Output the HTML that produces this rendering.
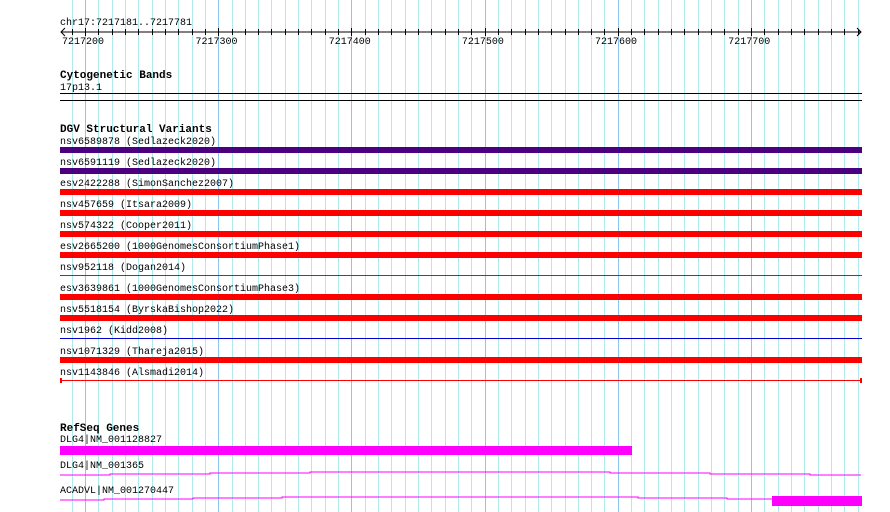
<!DOCTYPE html>
<html><head><meta charset="utf-8"><style>
html,body{margin:0;padding:0;background:#fff;width:890px;height:512px;overflow:hidden}
svg text{font-family:"Liberation Mono",monospace;font-size:10px;fill:#000}
svg text.b{font-weight:bold;font-size:11px}
</style></head><body>
<svg width="890" height="512" xmlns="http://www.w3.org/2000/svg">
<g id="grid"></g>
<text x="60" y="25">chr17:7217181..7217781</text>
<line x1="61" y1="32" x2="861" y2="32" stroke="#000"/>
<polyline points="65,28 61,32 65,36" fill="none" stroke="#000"/>
<polyline points="857,28 861,32 857,36" fill="none" stroke="#000"/>
<g id="ticks"></g>
<text x="83" y="44" text-anchor="middle">7217200</text>
<text x="216.5" y="44" text-anchor="middle">7217300</text>
<text x="349.7" y="44" text-anchor="middle">7217400</text>
<text x="482.9" y="44" text-anchor="middle">7217500</text>
<text x="616" y="44" text-anchor="middle">7217600</text>
<text x="749.3" y="44" text-anchor="middle">7217700</text>

<text class="b" x="60" y="78">Cytogenetic Bands</text>
<text x="60" y="90">17p13.1</text>
<rect x="60" y="93" width="802" height="1" fill="#000"/>
<rect x="60" y="100" width="802" height="1" fill="#000"/>

<text class="b" x="60" y="132">DGV Structural Variants</text>
<text x="60" y="144">nsv6589878 (Sedlazeck2020)</text>
<rect x="60" y="147" width="802" height="6" fill="#4b0082"/>
<text x="60" y="165">nsv6591119 (Sedlazeck2020)</text>
<rect x="60" y="168" width="802" height="6" fill="#4b0082"/>
<text x="60" y="186">esv2422288 (SimonSanchez2007)</text>
<rect x="60" y="189" width="802" height="6" fill="#f00"/>
<text x="60" y="207">nsv457659 (Itsara2009)</text>
<rect x="60" y="210" width="802" height="6" fill="#f00"/>
<text x="60" y="228">nsv574322 (Cooper2011)</text>
<rect x="60" y="231" width="802" height="6" fill="#f00"/>
<text x="60" y="249">esv2665200 (1000GenomesConsortiumPhase1)</text>
<rect x="60" y="252" width="802" height="6" fill="#f00"/>
<text x="60" y="270">nsv952118 (Dogan2014)</text>
<rect x="60" y="275" width="802" height="1" fill="#f00"/>
<text x="60" y="291">esv3639861 (1000GenomesConsortiumPhase3)</text>
<rect x="60" y="294" width="802" height="6" fill="#f00"/>
<text x="60" y="312">nsv5518154 (ByrskaBishop2022)</text>
<rect x="60" y="315" width="802" height="6" fill="#f00"/>
<text x="60" y="333">nsv1962 (Kidd2008)</text>
<rect x="60" y="338" width="802" height="1" fill="#00c"/>
<text x="60" y="354">nsv1071329 (Thareja2015)</text>
<rect x="60" y="357" width="802" height="6" fill="#f00"/>
<text x="60" y="375">nsv1143846 (Alsmadi2014)</text>
<rect x="60" y="380" width="802" height="1" fill="#f00"/>
<rect x="60" y="378" width="2" height="5" fill="#f00"/>
<rect x="860" y="378" width="2" height="5" fill="#f00"/>

<text class="b" x="60" y="431">RefSeq Genes</text>
<text x="60" y="442">DLG4|NM_001128827</text>
<rect x="60" y="446" width="572" height="9" fill="#f0f"/>
<text x="60" y="468">DLG4|NM_001365</text>
<polyline points="60,475 110,475 110,474 210,474 210,473 310,473 310,472 610,472 610,473 710,473 710,474 810,474 810,475 861,475" fill="none" stroke="#f0f" stroke-width="1"/>
<text x="60" y="493">ACADVL|NM_001270447</text>
<polyline points="60,500 104,500 104,499 193,499 193,498 282,498 282,497 638,497 638,498 727,498 727,499 772,499" fill="none" stroke="#f0f" stroke-width="1"/>
<rect x="772" y="496" width="90" height="10" fill="#f0f"/>
</svg>
<script>
var g=document.getElementById('grid'),t=document.getElementById('ticks'),s='',u='';
for(var k=-1;k<=58;k++){var x=85+13.32*k;var maj=((k%10)+10)%10==0;
s+='<rect x="'+(Math.round(x))+'" y="0" width="1" height="512" fill="'+(maj?'#8cc6ee':'#aeeaee')+'"/>';
u+='<rect x="'+(Math.round(x))+'" y="'+(maj?28:29)+'" width="1" height="'+(maj?8:6)+'" fill="#000"/>';}
g.innerHTML=s;t.innerHTML=u;
</script>
</body></html>
